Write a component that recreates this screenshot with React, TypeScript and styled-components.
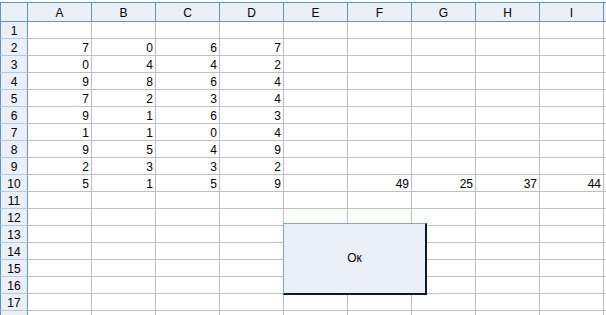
import styled, { createGlobalStyle } from 'styled-components';

const GlobalStyle = createGlobalStyle`
  html, body {
    margin: 0;
    padding: 0;
    background: #fff;
    overflow: hidden;
  }
  body {
    font-family: "Liberation Sans", Arial, sans-serif;
    font-size: 11px;
    color: #000;
  }
`;

// the last column only peeks in at the right edge, so its letter is off screen
const COLS = ['A', 'B', 'C', 'D', 'E', 'F', 'G', 'H', 'I', ''];
const ROW_COUNT = 18;

const DATA: Record<number, (number | null)[]> = {
  2: [7, 0, 6, 7],
  3: [0, 4, 4, 2],
  4: [9, 8, 6, 4],
  5: [7, 2, 3, 4],
  6: [9, 1, 6, 3],
  7: [1, 1, 0, 4],
  8: [9, 5, 4, 9],
  9: [2, 3, 3, 2],
  10: [5, 1, 5, 9, null, 49, 25, 37, 44],
};

const Sheet = styled.div`
  position: relative;
  padding-top: 2px;
  width: 606px;
  height: 315px;
  box-sizing: border-box;
  overflow: hidden;
`;

const Grid = styled.div`
  display: grid;
  grid-template-columns: 28px repeat(10, 64px);
  grid-template-rows: 19px repeat(${ROW_COUNT}, 17px);
  border-top: 1px solid #6591c9;
`;

const Corner = styled.div`
  background: #eaeff8;
  border-left: 1px solid #6591c9;
  border-right: 1px solid #6591c9;
  border-bottom: 1px solid #6591c9;
`;

const ColHead = styled.div`
  background: #eaeff8;
  border-right: 1px solid #6591c9;
  border-bottom: 1px solid #6591c9;
  display: flex;
  align-items: center;
  justify-content: center;
  font-size: 12px;
  padding-top: 1px;
`;

const RowHead = styled.div`
  background: #eaeff8;
  border-left: 1px solid #6591c9;
  border-right: 1px solid #6591c9;
  border-bottom: 1px solid #b9c9e4;
  display: flex;
  align-items: center;
  justify-content: center;
  font-size: 12px;
  padding-top: 1px;
`;

const Cell = styled.div`
  border-right: 1px solid #c0c0c0;
  border-bottom: 1px solid #c0c0c0;
  display: flex;
  align-items: center;
  justify-content: flex-end;
  padding: 1px 2px 0 0;
  font-size: 12px;
  overflow: hidden;
`;

const OkButton = styled.button`
  position: absolute;
  left: 283px;
  top: 223px;
  width: 144px;
  height: 72px;
  box-sizing: border-box;
  margin: 0;
  padding: 0 0 2px 0;
  background: #eaeff8;
  border-style: solid;
  border-width: 1px 2px 2px 1px;
  border-color: #7ba6dc #0b1a36 #0b1a36 #7ba6dc;
  font-family: "Liberation Sans", Arial, sans-serif;
  font-size: 12px;
  color: #000;
`;

export default function App() {
  const rows = Array.from({ length: ROW_COUNT }, (_, i) => i + 1);
  return (
    <>
      <GlobalStyle />
      <Sheet>
        <Grid>
          <Corner />
          {COLS.map((c, i) => (
            <ColHead key={i}>{c}</ColHead>
          ))}
          {rows.map((r) => (
            <Row key={r} row={r} />
          ))}
        </Grid>
        <OkButton>Ок</OkButton>
      </Sheet>
    </>
  );
}

function Row({ row }: { row: number }) {
  const values = DATA[row] || [];
  return (
    <>
      <RowHead>{row}</RowHead>
      {COLS.map((_, i) => {
        const v = values[i];
        return <Cell key={i}>{v === null || v === undefined ? '' : v}</Cell>;
      })}
    </>
  );
}
